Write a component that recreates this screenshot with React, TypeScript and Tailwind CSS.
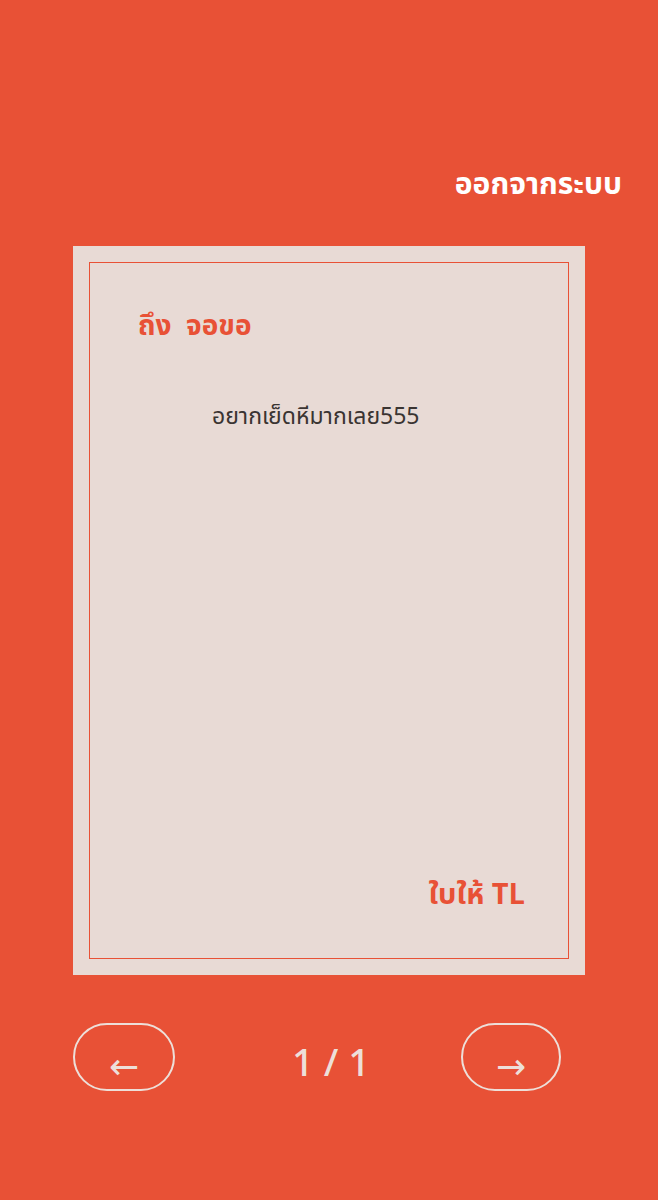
import React from 'react';

const thaiFont = { fontFamily: '"Noto Sans Thai", "Noto Sans", "DejaVu Sans", sans-serif' };

export default function App() {
  return (
    <div
      className="flex min-h-[1200px] w-full flex-col items-center bg-[#e85136] pt-[165px]"
      style={thaiFont}
    >
      <div className="flex w-full justify-end pr-[36px]">
        <button className="text-[30px] font-bold leading-[40px] text-white">ออกจากระบบ</button>
      </div>

      <div className="mt-[41px] h-[729px] w-[512px] bg-[#e8dad5] p-[16px]">
        <div className="flex h-full flex-col border border-[#e85136] pb-[43px] pl-[48px] pr-[43px] pt-[44px]">
          <h2 className="text-[28px] font-bold leading-[40px] text-[#e85136]">ถึง&nbsp; จอขอ</h2>
          <p className="mt-[55px] pl-[74px] text-[23px] leading-[30px] text-[#3a3432]">
            อยากเย็ดหีมากเลย555
          </p>
          <p className="mt-auto text-right text-[29px] font-bold leading-[40px] text-[#e85136]">
            ใบให้ TL
          </p>
        </div>
      </div>

      <div className="mt-[48px] flex w-[512px] items-center justify-between">
        <button className="flex h-[68px] w-[102px] items-center justify-center rounded-full border-2 border-[#eddfd9] pt-[22px] text-[36px] leading-none text-[#eddfd9]">
          ←
        </button>
        <span className="pl-[26px] pt-[16px] text-[38px] font-medium leading-none text-[#eddfd9]">1 / 1</span>
        <button className="mr-[24px] flex h-[68px] w-[100px] items-center justify-center rounded-full border-2 border-[#eddfd9] pt-[22px] text-[36px] leading-none text-[#eddfd9]">
          →
        </button>
      </div>
    </div>
  );
}
